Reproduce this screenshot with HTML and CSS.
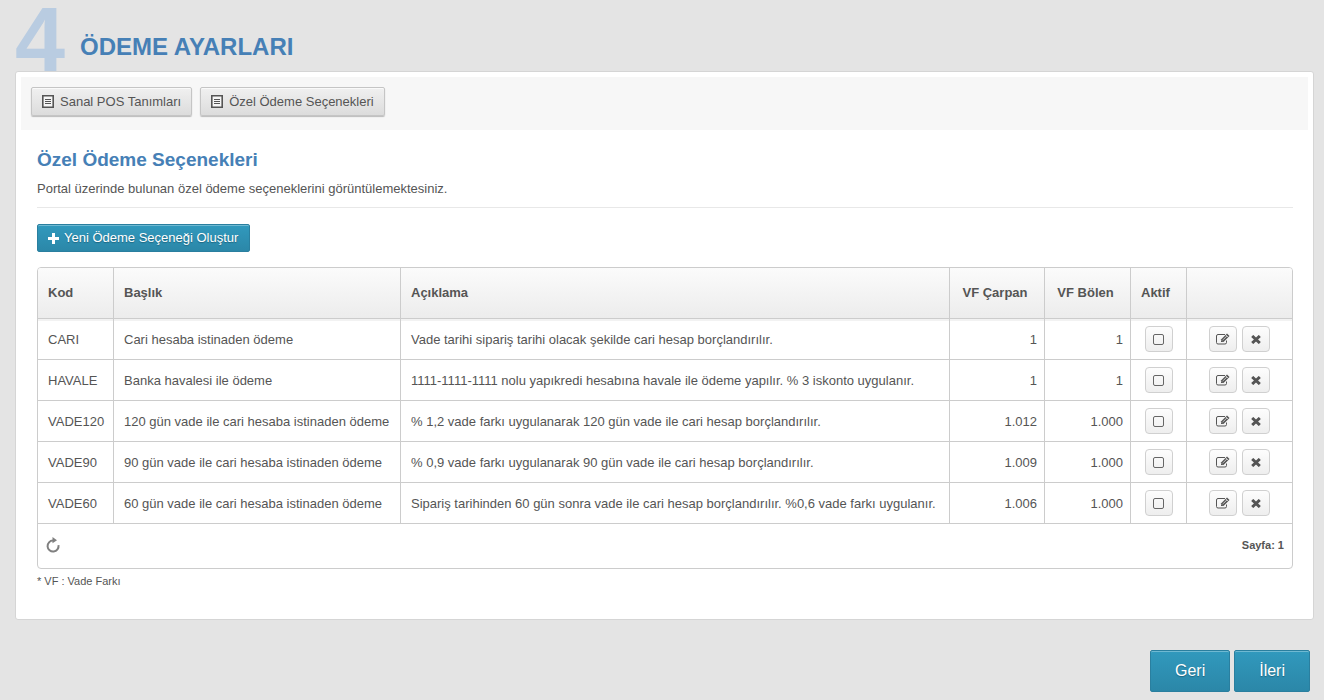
FILE: index.html
```html
<!DOCTYPE html>
<html lang="tr">
<head>
<meta charset="utf-8">
<title>Ödeme Ayarları</title>
<link rel="stylesheet" href="styles.css">
</head>
<body>
<svg class="sprite" aria-hidden="true">
  <symbol id="i-list" viewBox="0 0 12 13"><path fill="#f6f6f6" stroke="currentColor" stroke-width="1.6" d="M.8.8h10.4v11.4H.8z"/><path fill="none" stroke="currentColor" stroke-width="1.2" d="M3 4.5h6M3 6.5h6M3 8.5h6"/></symbol>
  <symbol id="i-plus" viewBox="0 0 11 11"><path fill="currentColor" d="M4 0h3v4h4v3H7v4H4V7H0V4h4z"/></symbol>
  <symbol id="i-edit" viewBox="0 0 14 12"><path fill="none" stroke="currentColor" d="M9 1.5H2A1.5 1.5 0 0 0 .5 3v6.5A1.5 1.5 0 0 0 2 11h7a1.5 1.5 0 0 0 1.500-1.500V7.500"/><path fill="currentColor" d="M11 .5 13.500 3 7.500 9H5V6.500z"/><path fill="none" stroke="#fff" stroke-width=".7" d="M7 6.800 10.800 3M9.700 1.800l2.500 2.500M5.800 7.400l.8.8"/></symbol>
  <symbol id="i-cross" viewBox="0 0 10 9"><path fill="none" stroke="currentColor" stroke-width="3" d="M1.200 1 8.800 8M8.800 1 1.200 8"/></symbol>
  <symbol id="i-reload" viewBox="0 0 14 16"><path fill="none" stroke="currentColor" stroke-width="2" d="M7 3.600A5.500 5.500 0 1 0 12.500 8.200"/><path fill="currentColor" d="M6.500 0 11 3.300 6.500 6.300z"/></symbol>
</svg>
<header class="page-head">
  <span class="step">4</span>
  <h1 class="page-title">ÖDEME AYARLARI</h1>
</header>
<main class="panel">
  <nav class="toolbar">
    <button class="btn" type="button"><svg class="icon-list"><use href="#i-list"/></svg>Sanal POS Tanımları</button>
    <button class="btn" type="button"><svg class="icon-list"><use href="#i-list"/></svg>Özel Ödeme Seçenekleri</button>
  </nav>
  <section class="content">
    <h2 class="section-title">Özel Ödeme Seçenekleri</h2>
    <p class="lead">Portal üzerinde bulunan özel ödeme seçeneklerini görüntülemektesiniz.</p>
    <button class="btn-primary" type="button"><svg class="icon-plus"><use href="#i-plus"/></svg>Yeni Ödeme Seçeneği Oluştur</button>
    <div class="grid">
      <table class="table">
        <colgroup><col class="c-code"><col class="c-title"><col><col class="c-mul"><col class="c-div"><col class="c-active"><col class="c-actions"></colgroup>
        <thead>
          <tr><th>Kod</th><th>Başlık</th><th>Açıklama</th><th class="center">VF Çarpan</th><th class="center">VF Bölen</th><th>Aktif</th><th></th></tr>
        </thead>
        <tbody>
          <tr><td>CARI</td><td>Cari hesaba istinaden ödeme</td><td>Vade tarihi sipariş tarihi olacak şekilde cari hesap borçlandırılır.</td><td class="num">1</td><td class="num">1</td>
            <td class="tools"><div class="row-tools"><label class="mini"><input class="check" type="checkbox" aria-label="Aktif"></label></div></td>
            <td class="tools"><div class="row-tools"><button class="mini" type="button" aria-label="Düzenle"><svg class="icon-edit"><use href="#i-edit"/></svg></button><button class="mini" type="button" aria-label="Sil"><svg class="icon-cross"><use href="#i-cross"/></svg></button></div></td></tr>
          <tr><td>HAVALE</td><td>Banka havalesi ile ödeme</td><td>1111-1111-1111 nolu yapıkredi hesabına havale ile ödeme yapılır. % 3 iskonto uygulanır.</td><td class="num">1</td><td class="num">1</td>
            <td class="tools"><div class="row-tools"><label class="mini"><input class="check" type="checkbox" aria-label="Aktif"></label></div></td>
            <td class="tools"><div class="row-tools"><button class="mini" type="button" aria-label="Düzenle"><svg class="icon-edit"><use href="#i-edit"/></svg></button><button class="mini" type="button" aria-label="Sil"><svg class="icon-cross"><use href="#i-cross"/></svg></button></div></td></tr>
          <tr><td>VADE120</td><td>120 gün vade ile cari hesaba istinaden ödeme</td><td>% 1,2 vade farkı uygulanarak 120 gün vade ile cari hesap borçlandırılır.</td><td class="num">1.012</td><td class="num">1.000</td>
            <td class="tools"><div class="row-tools"><label class="mini"><input class="check" type="checkbox" aria-label="Aktif"></label></div></td>
            <td class="tools"><div class="row-tools"><button class="mini" type="button" aria-label="Düzenle"><svg class="icon-edit"><use href="#i-edit"/></svg></button><button class="mini" type="button" aria-label="Sil"><svg class="icon-cross"><use href="#i-cross"/></svg></button></div></td></tr>
          <tr><td>VADE90</td><td>90 gün vade ile cari hesaba istinaden ödeme</td><td>% 0,9 vade farkı uygulanarak 90 gün vade ile cari hesap borçlandırılır.</td><td class="num">1.009</td><td class="num">1.000</td>
            <td class="tools"><div class="row-tools"><label class="mini"><input class="check" type="checkbox" aria-label="Aktif"></label></div></td>
            <td class="tools"><div class="row-tools"><button class="mini" type="button" aria-label="Düzenle"><svg class="icon-edit"><use href="#i-edit"/></svg></button><button class="mini" type="button" aria-label="Sil"><svg class="icon-cross"><use href="#i-cross"/></svg></button></div></td></tr>
          <tr><td>VADE60</td><td>60 gün vade ile cari hesaba istinaden ödeme</td><td>Sipariş tarihinden 60 gün sonra vade ile cari hesap borçlandırılır. %0,6 vade farkı uygulanır.</td><td class="num">1.006</td><td class="num">1.000</td>
            <td class="tools"><div class="row-tools"><label class="mini"><input class="check" type="checkbox" aria-label="Aktif"></label></div></td>
            <td class="tools"><div class="row-tools"><button class="mini" type="button" aria-label="Düzenle"><svg class="icon-edit"><use href="#i-edit"/></svg></button><button class="mini" type="button" aria-label="Sil"><svg class="icon-cross"><use href="#i-cross"/></svg></button></div></td></tr>
        </tbody>
      </table>
      <div class="grid-foot">
        <button class="reload" type="button" aria-label="Yenile"><svg class="icon-reload"><use href="#i-reload"/></svg></button>
        <span class="pages">Sayfa: 1</span>
      </div>
    </div>
    <p class="note">* VF : Vade Farkı</p>
  </section>
</main>
<footer class="wizard-nav">
  <button class="btn-large" type="button">Geri</button>
  <button class="btn-large" type="button">İleri</button>
</footer>
</body>
</html>
```
FILE: styles.css
```css
* { box-sizing: border-box; }
body {
  margin: 0;
  padding: 0 10px 8px 15px;
  background: #e4e4e4;
  color: #555;
  font: 13px/20px "Liberation Sans", Arial, sans-serif;
}
h1, h2, p { margin: 0; }
button { font: inherit; color: inherit; cursor: pointer; }
svg { flex: none; display: block; }
.sprite { display: none; }

.page-head {
  display: flex;
  align-items: flex-end;
  gap: 15px;
  height: 71px;
}
.step {
  color: #b9cce1;
  font-size: 90px;
  font-weight: bold;
  line-height: 80px;
  height: 71px;
}
.page-title {
  color: #4680b6;
  font-size: 24px;
  line-height: 28px;
  padding-bottom: 10px;
}

.panel {
  background: #fff;
  border: 1px solid #d5d5d5;
  border-radius: 3px;
  padding: 5px 5px 29px;
}
.toolbar {
  display: flex;
  gap: 8px;
  padding: 10px 10px 14px;
  background: #f7f7f7;
}
.btn {
  display: flex;
  align-items: center;
  gap: 6px;
  height: 29px;
  padding: 0 10px;
  border: 1px solid #c5c5c5;
  border-radius: 2px;
  background: linear-gradient(#f0f0f0, #dcdcdc);
  box-shadow: inset 0 1px 0 #fafafa, 0 1px 1px #bbb;
}
.icon-list { width: 12px; height: 13px; }

.content { padding: 20px 15px 0 16px; }
.section-title {
  color: #4680b6;
  font-size: 19px;
  line-height: 20px;
}
.lead {
  padding: 9px 0 8px;
  margin-bottom: 16px;
  border-bottom: 1px solid #e8e8e8;
}
.btn-primary, .btn-large {
  color: #fff;
  border: 1px solid #2a7f9f;
  border-radius: 2px;
  background: linear-gradient(#3199bd, #2b87a8);
  box-shadow: inset 0 1px 0 #6fb9d2;
  text-shadow: 0 1px 1px #1f6680;
}
.btn-primary {
  display: flex;
  align-items: center;
  gap: 5px;
  height: 28px;
  padding: 0 11px 0 10px;
}
.icon-plus { width: 11px; height: 11px; }

.grid {
  margin-top: 15px;
  border: 1px solid #ccc;
  border-radius: 4px;
  overflow: hidden;
}
.table {
  width: 100%;
  table-layout: fixed;
  border-collapse: separate;
  border-spacing: 0;
}
.c-code { width: 75px; }
.c-title { width: 287px; }
.c-mul { width: 95px; }
.c-div { width: 86px; }
.c-active { width: 56px; }
.c-actions { width: 106px; }
th, td {
  padding: 0 10px;
  text-align: left;
  border-left: 1px solid #ccc;
  border-bottom: 1px solid #ccc;
  white-space: nowrap;
}
th:first-child, td:first-child { border-left: 0; }
th {
  height: 51px;
  background: linear-gradient(#fbfbfb, #ececec);
}
td { height: 41px; padding-top: 2px; }
tbody tr:first-child td { box-shadow: inset 0 2px 0 #f2f2f2; }
th.center { text-align: center; padding: 0 4px 0 0; }
td.num { text-align: right; padding-right: 7px; }
td.tools { padding: 0; }
.row-tools { display: flex; justify-content: center; gap: 5px; }
.mini {
  display: flex;
  align-items: center;
  justify-content: center;
  width: 28px;
  height: 26px;
  padding: 0;
  border: 1px solid #d0d0d0;
  border-radius: 4px;
  background: linear-gradient(#fdfdfd, #eee);
}
.check {
  appearance: none;
  width: 11px;
  height: 11px;
  margin: 0;
  border: 1px solid #666;
  border-radius: 2px;
}
.check:checked { background: #666; }
.icon-edit { width: 14px; height: 12px; }
.icon-cross { width: 10px; height: 9px; }

.grid-foot {
  display: flex;
  align-items: center;
  justify-content: space-between;
  height: 44px;
  padding: 0 8px 2px;
  font-size: 11px;
  font-weight: bold;
}
.reload { border: 0; padding: 0; background: none; color: #808080; }
.icon-reload { width: 14px; height: 16px; }
.note { font-size: 11px; padding-top: 3px; line-height: 18px; }

.wizard-nav {
  display: flex;
  justify-content: flex-end;
  gap: 4px;
  padding: 30px 4px 0 0;
}
.btn-large {
  height: 42px;
  padding: 0 24px;
  font-size: 16px;
}
```
